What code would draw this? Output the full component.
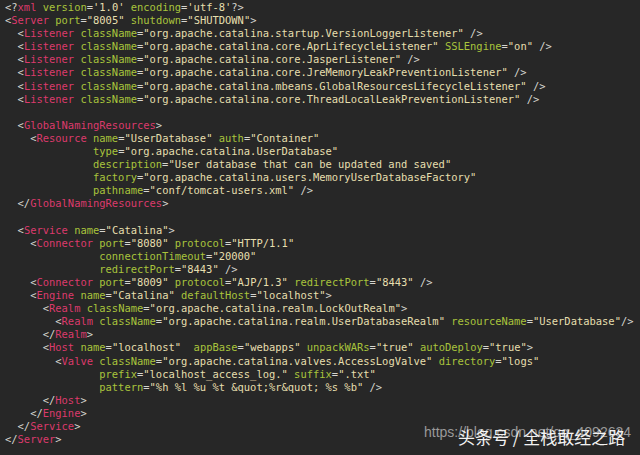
import React from 'react';

const lines = [
  `<?xml version='1.0' encoding='utf-8'?>`,
  `<Server port="8005" shutdown="SHUTDOWN">`,
  `  <Listener className="org.apache.catalina.startup.VersionLoggerListener" />`,
  `  <Listener className="org.apache.catalina.core.AprLifecycleListener" SSLEngine="on" />`,
  `  <Listener className="org.apache.catalina.core.JasperListener" />`,
  `  <Listener className="org.apache.catalina.core.JreMemoryLeakPreventionListener" />`,
  `  <Listener className="org.apache.catalina.mbeans.GlobalResourcesLifecycleListener" />`,
  `  <Listener className="org.apache.catalina.core.ThreadLocalLeakPreventionListener" />`,
  ``,
  `  <GlobalNamingResources>`,
  `    <Resource name="UserDatabase" auth="Container"`,
  `              type="org.apache.catalina.UserDatabase"`,
  `              description="User database that can be updated and saved"`,
  `              factory="org.apache.catalina.users.MemoryUserDatabaseFactory"`,
  `              pathname="conf/tomcat-users.xml" />`,
  `  </GlobalNamingResources>`,
  ``,
  `  <Service name="Catalina">`,
  `    <Connector port="8080" protocol="HTTP/1.1"`,
  `               connectionTimeout="20000"`,
  `               redirectPort="8443" />`,
  `    <Connector port="8009" protocol="AJP/1.3" redirectPort="8443" />`,
  `    <Engine name="Catalina" defaultHost="localhost">`,
  `      <Realm className="org.apache.catalina.realm.LockOutRealm">`,
  `        <Realm className="org.apache.catalina.realm.UserDatabaseRealm" resourceName="UserDatabase"/>`,
  `      </Realm>`,
  `      <Host name="localhost"  appBase="webapps" unpackWARs="true" autoDeploy="true">`,
  `        <Valve className="org.apache.catalina.valves.AccessLogValve" directory="logs"`,
  `               prefix="localhost_access_log." suffix=".txt"`,
  `               pattern="%h %l %u %t &quot;%r&quot; %s %b" />`,
  `      </Host>`,
  `    </Engine>`,
  `  </Service>`,
  `</Server>`,
];

const PUNCT = 'text-[#d6d6d0]';
const TAG = 'text-[#dc3a6c]';
const ATTR = 'text-[#a9c43c]';
const STR = 'text-[#e6dfae]';

type Tok = { text: string; cls: string };

// tiny xml highlighter, good enough for this snippet
const tokenize = (line: string): Tok[] => {
  const out: Tok[] = [];
  const re = /(<\?|<\/|<)(\w+)|(\w+)(=)|("[^"]*"|'[^']*')|(\?>|\/>|>)|(\s+)|(.)/g;
  let m: RegExpExecArray | null;
  while ((m = re.exec(line))) {
    if (m[2]) {
      out.push({ text: m[1], cls: PUNCT });
      out.push({ text: m[2], cls: TAG });
    } else if (m[3]) {
      out.push({ text: m[3], cls: ATTR });
      out.push({ text: m[4], cls: PUNCT });
    } else if (m[5]) {
      out.push({ text: m[5], cls: STR });
    } else {
      out.push({ text: m[0], cls: PUNCT });
    }
  }
  return out;
};

const App: React.FC = () => {
  return (
    <div className="relative w-[640px] h-[455px] overflow-hidden bg-[#272727]">
      <pre className="pl-[5px] pt-[1px] font-['DejaVu_Sans_Mono',monospace] text-[10.45px] leading-[13.1px] whitespace-pre">
        {lines.map((line, i) => (
          <div key={i} className="h-[13.1px]">
            {tokenize(line).map((t, j) => (
              <span key={j} className={t.cls}>
                {t.text}
              </span>
            ))}
          </div>
        ))}
      </pre>

      {/* watermark, overlapping like the original */}
      <div className="absolute left-[424px] top-[423px] font-['Liberation_Sans',sans-serif] text-[14px] leading-[18px] text-[#9a9a9a] whitespace-nowrap">
        https://blog.csdn.net/qq_4092634
      </div>
      <div className="absolute left-[458px] top-[426px] font-['Noto_Sans_CJK_SC',sans-serif] text-[17px] leading-[22px] text-[#f2f2f2] whitespace-nowrap">
        头条号 / 全栈敢经之路
      </div>
    </div>
  );
};

export default App;
